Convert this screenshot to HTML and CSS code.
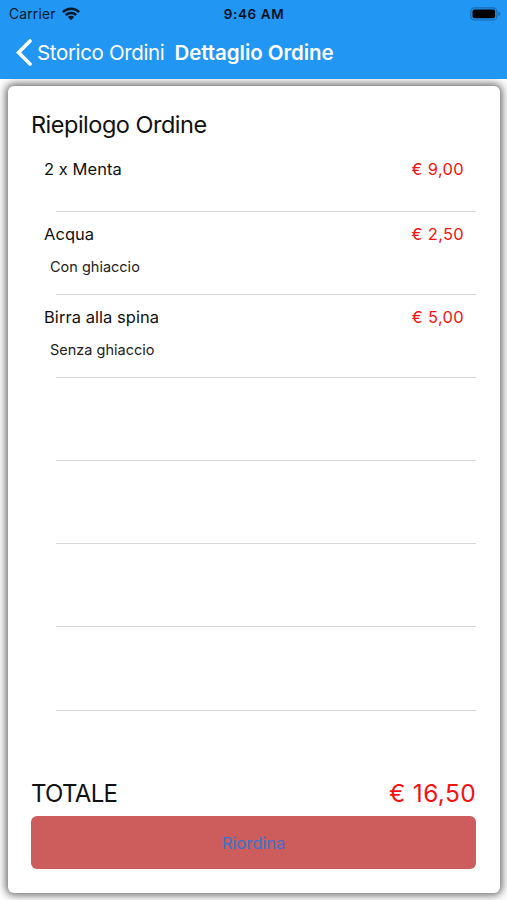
FILE: index.html
```html
<!DOCTYPE html>
<html lang="it">
<head>
<meta charset="utf-8">
<title>Dettaglio Ordine</title>
<link rel="stylesheet" href="styles.css">
</head>
<body>
<header class="header">
  <div class="status">
    <div class="carrier"><span class="carrier-name">Carrier</span>
      <svg class="wifi" width="18" height="14" viewBox="0 0 18 14"><g fill="none" stroke="#071829" stroke-width="2.4"><path d="M.9 5.1A11.6 11.6 0 0 1 17.1 5.1"/><path d="M3.8 8.1A7.4 7.4 0 0 1 14.2 8.1"/></g><path fill="#071829" d="M5.8 10A4.6 4.6 0 0 1 12.2 10L9 13.3z"/></svg>
    </div>
    <span class="time">9:46 AM</span>
    <svg class="battery" width="31" height="14" viewBox="0 0 31 14"><rect x=".8" y=".8" width="26" height="12.2" rx="3.8" fill="none" stroke="#176bb0" stroke-width="1.2"/><rect x="2.5" y="2.5" width="22.6" height="8.8" rx="2" fill="#000"/><path d="M28.4 4.6Q30.4 5.4 30.4 6.9T28.4 9.2z" fill="#176bb0"/></svg>
  </div>
  <nav class="nav">
    <svg class="chevron" width="17" height="27" viewBox="0 0 17 27"><path d="M15 2L3.6 13.5L15 25" fill="none" stroke="#fff" stroke-width="3.6" stroke-linecap="round" stroke-linejoin="miter"/></svg>
    <span class="back">Storico Ordini</span>
    <span class="title">Dettaglio Ordine</span>
  </nav>
</header>
<main class="card">
  <h1 class="heading">Riepilogo Ordine</h1>
  <ul class="items">
    <li class="item item-short"><div class="line"><span class="name">2 x Menta</span><span class="price">€ 9,00</span></div></li>
    <li class="item"><div class="line"><span class="name">Acqua</span><span class="price">€ 2,50</span></div><div class="note">Con ghiaccio</div></li>
    <li class="item"><div class="line"><span class="name">Birra alla spina</span><span class="price">€ 5,00</span></div><div class="note">Senza ghiaccio</div></li>
    <li class="item"></li>
    <li class="item"></li>
    <li class="item"></li>
    <li class="item"></li>
  </ul>
  <div class="total"><span class="total-label">TOTALE</span><span class="total-price">€ 16,50</span></div>
  <button class="reorder">Riordina</button>
</main>
</body>
</html>
```
FILE: styles.css
```css
* { box-sizing: border-box; }
body {
  margin: 0;
  height: 900px;
  overflow: hidden;
  background: #fff;
  color: #111;
  font-family: Inter, "Liberation Sans", sans-serif;
}
.header {
  position: relative;
  height: 79px;
  background: #2196f3;
}
.status {
  display: grid;
  grid-template-columns: 1fr auto 1fr;
  align-items: center;
  height: 27px;
  padding: 0 6px 0 9px;
  color: #071829;
}
.carrier { display: flex; align-items: center; gap: 6px; }
.carrier-name { font-size: 13.8px; letter-spacing: .2px; }
.time {
  margin-right: 2px;
  color: #03111f;
  font-size: 13.5px;
  font-weight: 600;
  letter-spacing: .6px;
}
.battery { justify-self: end; }
.nav {
  display: flex;
  align-items: center;
  height: 50px;
  padding-left: 15px;
  color: #fff;
  font-size: 20.5px;
  white-space: nowrap;
}
.back { margin-left: 5px; letter-spacing: -.35px; }
.title { margin-left: 10px; font-weight: 600; letter-spacing: -.06px; }
.card {
  display: flex;
  flex-direction: column;
  height: 807px;
  margin: 7px 7px 0 8px;
  padding: 17px 24px 24px 23px;
  background: #fff;
  border-radius: 6px;
  box-shadow: 0 0 9px 1.5px rgba(0, 0, 0, .62);
}
.heading {
  margin: 0;
  height: 43px;
  font-size: 23.5px;
  font-weight: 400;
  line-height: 44px;
  letter-spacing: -.5px;
}
.items {
  margin: 0;
  padding: 0;
  list-style: none;
}
.item {
  position: relative;
  height: 83.1px;
  padding: 10px 12px 0 13px;
}
.item-short { height: 66px; padding-top: 11px; }
.item::after {
  content: "";
  position: absolute;
  right: 0;
  bottom: 0;
  left: 25px;
  height: 1px;
  background: #d6d6d8;
}
.line {
  display: flex;
  justify-content: space-between;
  height: 25px;
  font-size: 16.5px;
  line-height: 25px;
  letter-spacing: .05px;
}
.price { color: #f51212; letter-spacing: .3px; }
.note {
  padding: 9px 0 0 6px;
  color: #222;
  font-size: 14.5px;
  line-height: 22px;
}
.total {
  display: flex;
  justify-content: space-between;
  align-items: center;
  height: 46px;
  margin-top: auto;
  font-size: 24px;
  letter-spacing: -.7px;
}
.total-price { color: #f51212; font-size: 24.5px; letter-spacing: .35px; }
.reorder {
  height: 53px;
  padding: 0;
  border: 0;
  border-radius: 6px;
  background: #cd5c5c;
  color: #3d72d2;
  font: 400 16.5px Inter, sans-serif;
}
```
